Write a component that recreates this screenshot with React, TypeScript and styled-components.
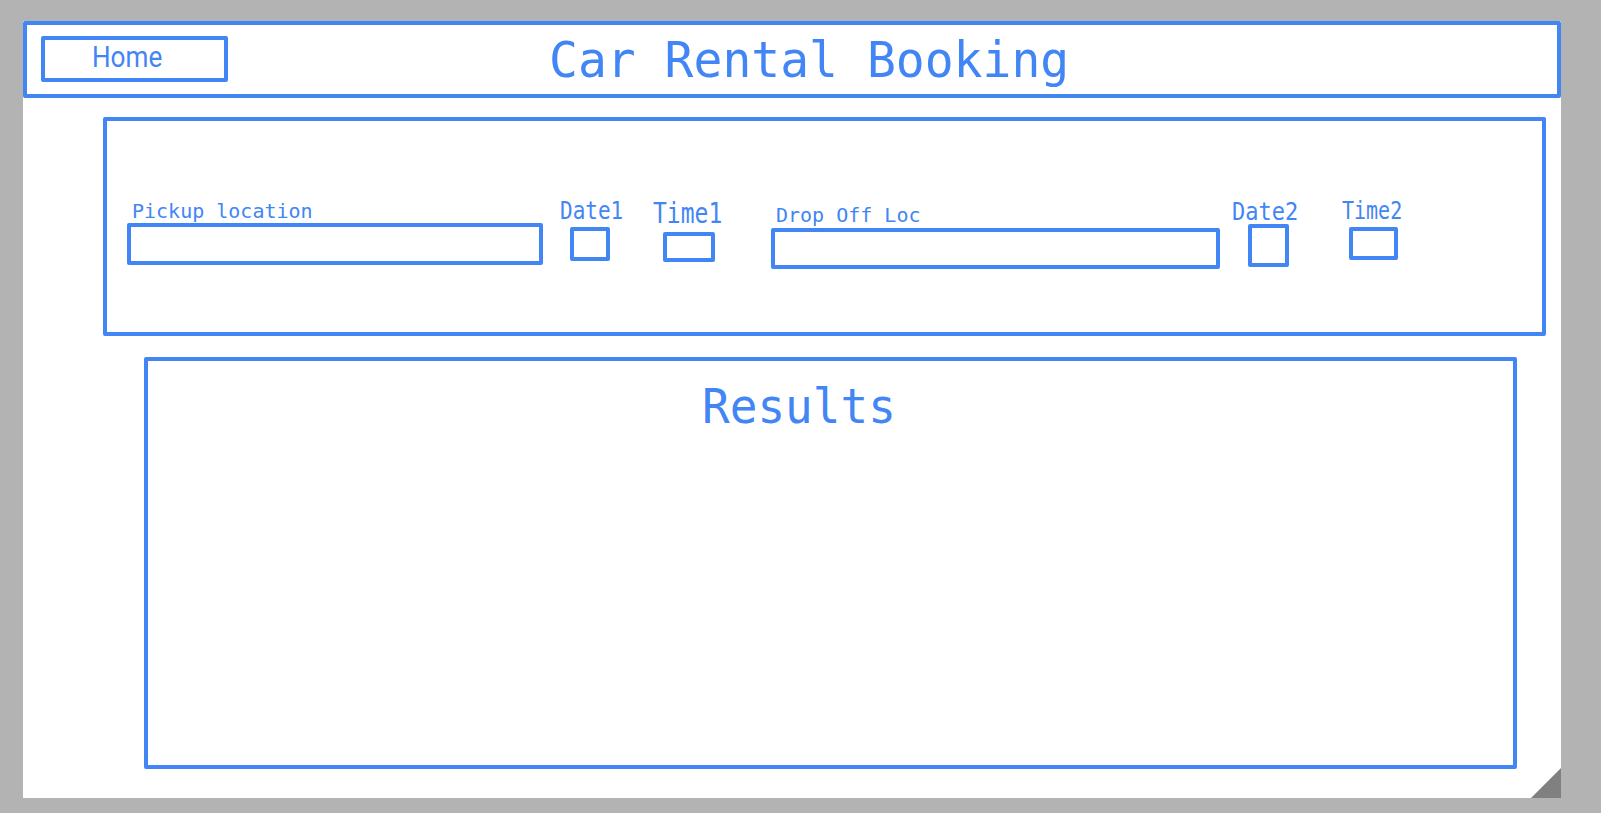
import React from 'react';
import styled, { createGlobalStyle } from 'styled-components';

const BLUE = '#4285f4';
const MONO = '"DejaVu Sans Mono", "Liberation Mono", monospace';
const LINE = 4;

const GlobalStyle = createGlobalStyle`
  html, body {
    margin: 0;
    padding: 0;
    background: #b3b3b3;
  }
  #root {
    padding: 21px 0 0 23px;
    min-height: 813px;
    box-sizing: border-box;
  }
`;

interface FieldData {
  label: string;
  left: number;
  width: number;
  top: number;
  size: number;
  stretch: number;
  labelIndent: number;
  boxW: number;
  boxH: number;
  boxGap: number;
  boxIndent: number;
}

// positions read off the wireframe, each relative to the previous field
const fields: FieldData[] = [
  { label: 'Pickup location', left: 20, width: 416, top: 80, size: 20, stretch: 1, labelIndent: 5, boxW: 416, boxH: 42, boxGap: 2, boxIndent: 0 },
  { label: 'Date1', left: 17, width: 62, top: 78, size: 21, stretch: 1.18, labelIndent: 0, boxW: 40, boxH: 34, boxGap: 7, boxIndent: 10 },
  { label: 'Time1', left: 31, width: 70, top: 78, size: 23, stretch: 1.25, labelIndent: 0, boxW: 52, boxH: 30, boxGap: 10, boxIndent: 10 },
  { label: 'Drop Off Loc', left: 48, width: 449, top: 84, size: 20, stretch: 1, labelIndent: 5, boxW: 449, boxH: 41, boxGap: 3, boxIndent: 0 },
  { label: 'Date2', left: 12, width: 66, top: 79, size: 22, stretch: 1.12, labelIndent: 0, boxW: 41, boxH: 43, boxGap: 2, boxIndent: 16 },
  { label: 'Time2', left: 44, width: 61, top: 77, size: 20, stretch: 1.23, labelIndent: 0, boxW: 49, boxH: 33, boxGap: 9, boxIndent: 7 },
];

export default function App(): JSX.Element {
  return (
    <>
      <GlobalStyle />
      <Canvas>
        <Header>
          <HomeButton>
            <HomeText>Home</HomeText>
          </HomeButton>
          <Title>Car Rental Booking</Title>
        </Header>

        <SearchPanel>
          {fields.map((f) => (
            <Field key={f.label} $left={f.left} $width={f.width} $top={f.top}>
              <Label $size={f.size} $stretch={f.stretch} $indent={f.labelIndent}>
                {f.label}
              </Label>
              <InputBox $w={f.boxW} $h={f.boxH} $gap={f.boxGap} $indent={f.boxIndent} />
            </Field>
          ))}
        </SearchPanel>

        <ResultsPanel>
          <ResultsTitle>Results</ResultsTitle>
        </ResultsPanel>

        <ResizeCorner />
      </Canvas>
    </>
  );
}

const Canvas = styled.div`
  position: relative;
  width: 1538px;
  height: 777px;
  background: #ffffff;
  display: flex;
  flex-direction: column;
  align-items: flex-start;
`;

const Header = styled.header`
  box-sizing: border-box;
  width: 100%;
  height: 77px;
  border: ${LINE}px solid ${BLUE};
  border-radius: 2px;
  display: flex;
  align-items: flex-start;
  padding: 11px 0 0 14px;
`;

const HomeButton = styled.button`
  box-sizing: border-box;
  width: 187px;
  height: 46px;
  border: ${LINE}px solid ${BLUE};
  border-radius: 2px;
  background: #ffffff;
  display: flex;
  align-items: flex-start;
  padding: 0 0 0 47px;
  margin: 0;
  cursor: pointer;
`;

const HomeText = styled.span`
  font-family: Roboto, "Liberation Sans", sans-serif;
  font-size: 30px;
  line-height: 30px;
  color: ${BLUE};
  display: inline-block;
  margin-top: 2px;
  transform: scaleX(0.87);
  transform-origin: left top;
`;

const Title = styled.h1`
  margin: -1px 0 0 321px;
  font-family: ${MONO};
  font-weight: 400;
  font-size: 48px;
  line-height: 48px;
  color: ${BLUE};
  white-space: nowrap;
  transform: scaleY(1.03);
  transform-origin: left top;
`;

const SearchPanel = styled.section`
  box-sizing: border-box;
  width: 1443px;
  height: 219px;
  margin: 19px 0 0 80px;
  border: ${LINE}px solid ${BLUE};
  border-radius: 2px;
  display: flex;
  align-items: flex-start;
`;

const Field = styled.div<{ $left: number; $width: number; $top: number }>`
  flex-shrink: 0;
  display: flex;
  flex-direction: column;
  align-items: flex-start;
  width: ${({ $width }) => $width}px;
  margin: ${({ $top }) => $top}px 0 0 ${({ $left }) => $left}px;
`;

const Label = styled.label<{ $size: number; $stretch: number; $indent: number }>`
  display: block;
  margin-left: ${({ $indent }) => $indent}px;
  font-family: ${MONO};
  font-size: ${({ $size }) => $size}px;
  line-height: ${({ $size }) => $size}px;
  color: ${BLUE};
  white-space: nowrap;
  transform: scaleY(${({ $stretch }) => $stretch});
  transform-origin: left top;
`;

const InputBox = styled.div<{ $w: number; $h: number; $gap: number; $indent: number }>`
  box-sizing: border-box;
  width: ${({ $w }) => $w}px;
  height: ${({ $h }) => $h}px;
  margin: ${({ $gap }) => $gap}px 0 0 ${({ $indent }) => $indent}px;
  border: ${LINE}px solid ${BLUE};
  border-radius: 2px;
  background: #ffffff;
`;

const ResultsPanel = styled.section`
  box-sizing: border-box;
  width: 1373px;
  height: 412px;
  margin: 21px 0 0 121px;
  border: ${LINE}px solid ${BLUE};
  border-radius: 2px;
  padding: 21px 0 0 554px;
`;

const ResultsTitle = styled.h2`
  margin: 0;
  font-family: ${MONO};
  font-weight: 400;
  font-size: 46px;
  line-height: 46px;
  color: ${BLUE};
  white-space: nowrap;
  transform: scaleY(1.05);
  transform-origin: left top;
`;

const ResizeCorner = styled.div`
  position: absolute;
  right: 0;
  bottom: 0;
  width: 30px;
  height: 30px;
  background: #808080;
  clip-path: polygon(100% 0, 100% 100%, 0 100%);
`;
